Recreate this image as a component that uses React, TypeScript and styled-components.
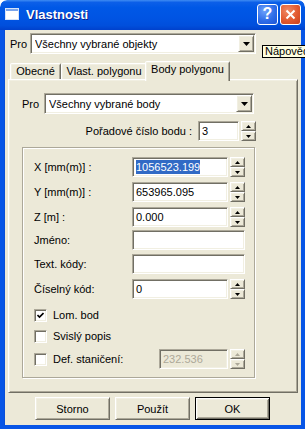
import React from "react";
import styled, { createGlobalStyle, css } from "styled-components";

const GlobalStyle = createGlobalStyle`
  html, body {
    margin: 0;
    padding: 0;
    background: #ffffff;
  }
  body {
    font-family: "Liberation Sans", Arial, sans-serif;
    font-size: 11px;
    color: #000;
  }
`;

const raised = css`
  border: 1px solid;
  border-color: #ffffff #716f64 #716f64 #ffffff;
  box-shadow: inset 1px 1px 0 #f1efe2, inset -1px -1px 0 #aca899;
`;

const sunken = css`
  border: 1px solid;
  border-color: #aca899 #ffffff #ffffff #aca899;
  box-shadow: inset 1px 1px 0 #716f64, inset -1px -1px 0 #f1efe2;
`;

const Window = styled.div`
  position: relative;
  width: 305px;
  height: 429px;
  display: flex;
  flex-direction: column;
  overflow: hidden;
  border-radius: 7px 7px 0 0;
`;

const TitleBar = styled.div`
  flex: none;
  height: 30px;
  box-sizing: border-box;
  display: flex;
  align-items: center;
  padding: 0 4px 2px 5px;
  background: linear-gradient(
    to bottom,
    #3f8cf3 0%,
    #0c5fe8 8%,
    #0058e6 25%,
    #0054e3 60%,
    #004fdc 85%,
    #0041cc 100%
  );
  border-radius: 7px 7px 0 0;
`;

const TitleText = styled.span`
  margin-left: 7px;
  font-size: 13px;
  font-weight: bold;
  color: #ffffff;
  text-shadow: 1px 1px 0 #0a1f8c;
  flex: 1;
`;

const CaptionButton = styled.div<{ $close?: boolean }>`
  width: 21px;
  height: 21px;
  box-sizing: border-box;
  margin-left: 2px;
  border: 1px solid #ffffff;
  border-radius: 3px;
  display: flex;
  align-items: center;
  justify-content: center;
  color: #ffffff;
  font-weight: bold;
  font-size: 16px;
  background: ${(p) =>
    p.$close
      ? "radial-gradient(circle at 35% 30%, #f08a66 0%, #e25a30 55%, #c9401c 100%)"
      : "radial-gradient(circle at 35% 30%, #6ea2fb 0%, #2f6de8 55%, #1c54d6 100%)"};
`;

const Frame = styled.div`
  flex: 1;
  display: flex;
  flex-direction: column;
  background: #ece9d8;
  border: 4px solid #0755e6;
  border-top: 0;
  box-shadow: inset 1px 0 0 #0a4fd8;
`;

const TopRow = styled.div`
  display: flex;
  align-items: center;
  margin: 3px 0 0 6px;
`;

const Label = styled.span<{ $w?: number; $mr?: number }>`
  flex: none;
  width: ${(p) => (p.$w ? `${p.$w}px` : "auto")};
  margin-right: ${(p) => p.$mr ?? 0}px;
  white-space: nowrap;
`;

const Combo = styled.div<{ $w: number }>`
  box-sizing: border-box;
  width: ${(p) => p.$w}px;
  height: 21px;
  ${sunken};
  background: #ffffff;
  display: flex;
  align-items: center;
  padding: 0 1px 0 4px;
`;

const ComboText = styled.span`
  flex: 1;
  white-space: nowrap;
  overflow: hidden;
`;

const DropButton = styled.div`
  box-sizing: border-box;
  width: 16px;
  height: 17px;
  ${raised};
  background: #ece9d8;
  display: flex;
  align-items: center;
  justify-content: center;
`;

const TabStrip = styled.div`
  display: flex;
  align-items: flex-end;
  height: 18px;
  margin: 7px 0 0 4px;
  padding-left: 2px;
`;

const Tab = styled.div<{ $w: number; $active?: boolean }>`
  position: relative;
  box-sizing: border-box;
  width: ${(p) => p.$w}px;
  height: ${(p) => (p.$active ? 20 : 16)}px;
  margin: ${(p) => (p.$active ? "0 -2px -2px -2px" : "0")};
  z-index: ${(p) => (p.$active ? 2 : 1)};
  background: #ece9d8;
  border: 1px solid;
  border-bottom: 0;
  border-color: #ffffff #716f64 transparent #ffffff;
  border-radius: 2px 2px 0 0;
  box-shadow: inset 1px 1px 0 #f1efe2, inset -1px 0 0 #aca899;
  text-align: center;
  line-height: ${(p) => (p.$active ? 15 : 14)}px;
  white-space: nowrap;
`;

const Panel = styled.div`
  position: relative;
  box-sizing: border-box;
  height: 314px;
  margin: 0 3px 0 4px;
  ${raised};
  padding: 13px 41px 0 13px;
  display: flex;
  flex-direction: column;
`;

const PanelRow = styled.div<{ $mt?: number; $end?: boolean }>`
  display: flex;
  align-items: center;
  justify-content: ${(p) => (p.$end ? "flex-end" : "flex-start")};
  margin-top: ${(p) => p.$mt ?? 0}px;
`;

const GroupBox = styled.div`
  box-sizing: border-box;
  width: 233px;
  height: 231px;
  margin-top: 6px;
  border: 1px solid #aca899;
  box-shadow: inset 1px 1px 0 #ffffff, 1px 1px 0 #ffffff;
  padding: 9px 9px 0 11px;
  display: flex;
  flex-direction: column;
`;

const FieldRow = styled.div<{ $mt?: number }>`
  display: grid;
  grid-template-columns: 98px 113px;
  align-items: center;
  height: 20px;
  margin-top: ${(p) => p.$mt ?? 0}px;
`;

const CheckRow = styled.div<{ $mt?: number }>`
  display: flex;
  align-items: center;
  height: 20px;
  margin-top: ${(p) => p.$mt ?? 0}px;
`;

const Field = styled.div<{ $push?: boolean }>`
  display: flex;
  gap: 2px;
  margin-left: ${(p) => (p.$push ? "auto" : "0")};
`;

const Edit = styled.div<{ $w: number; $disabled?: boolean }>`
  box-sizing: border-box;
  width: ${(p) => p.$w}px;
  height: 20px;
  ${sunken};
  background: ${(p) => (p.$disabled ? "#ece9d8" : "#ffffff")};
  color: ${(p) => (p.$disabled ? "#aca899" : "#000")};
  display: flex;
  align-items: center;
  padding-left: 3px;
  white-space: nowrap;
  overflow: hidden;
`;

const Selected = styled.span`
  background: #316ac5;
  color: #ffffff;
  line-height: 14px;
`;

const Spin = styled.div`
  flex: none;
  width: 15px;
  height: 20px;
  display: flex;
  flex-direction: column;
`;

const SpinHalf = styled.div`
  flex: 1;
  box-sizing: border-box;
  ${raised};
  background: #ece9d8;
  display: flex;
  align-items: center;
  justify-content: center;
`;

const CheckBox = styled.div`
  flex: none;
  box-sizing: border-box;
  width: 13px;
  height: 13px;
  ${sunken};
  background: #ffffff;
  display: flex;
  align-items: center;
  justify-content: center;
  margin-right: 6px;
`;

const ButtonRow = styled.div`
  display: flex;
  justify-content: center;
  gap: 5px;
  margin-top: 4px;
`;

const Button = styled.div<{ $default?: boolean }>`
  box-sizing: border-box;
  width: 75px;
  height: 23px;
  display: flex;
  align-items: center;
  justify-content: center;
  background: #ece9d8;
  ${(p) =>
    p.$default
      ? css`
          border: 1px solid #000;
          box-shadow: inset 1px 1px 0 #ffffff, inset -1px -1px 0 #716f64,
            inset 2px 2px 0 #f1efe2, inset -2px -2px 0 #aca899;
        `
      : raised};
`;

const Tooltip = styled.div`
  position: absolute;
  left: 262px;
  top: 45px;
  height: 13px;
  box-sizing: border-box;
  padding: 0 2px;
  background: #ffffe1;
  border: 1px solid #000;
  line-height: 11px;
  white-space: nowrap;
  z-index: 5;
`;

const Arrow = ({ down = true, w = 5, color = "#000" }: { down?: boolean; w?: number; color?: string }) => {
  const h = Math.ceil(w / 2);
  return (
    <svg width={w} height={h} viewBox={`0 0 ${w} ${h}`} style={{ display: "block" }}>
      <polygon points={down ? `0,0 ${w},0 ${w / 2},${h}` : `0,${h} ${w},${h} ${w / 2},0`} fill={color} />
    </svg>
  );
};

const SpinBox = ({ disabled }: { disabled?: boolean }) => {
  const c = disabled ? "#aca899" : "#000";
  return (
    <Spin>
      <SpinHalf>
        <Arrow down={false} w={5} color={c} />
      </SpinHalf>
      <SpinHalf>
        <Arrow w={5} color={c} />
      </SpinHalf>
    </Spin>
  );
};

const Check = () => (
  <svg width="7" height="7" viewBox="0 0 7 7">
    <path d="M0.5 3 L2.5 5 L6.5 1" stroke="#000" strokeWidth="1.6" fill="none" />
  </svg>
);

const WindowIcon = () => (
  <svg width="14" height="12" viewBox="0 0 14 12">
    <rect x="0.5" y="0.5" width="13" height="11" fill="#ffffff" stroke="#d8e4f8" />
    <rect x="1" y="1" width="12" height="2" fill="#7aa4ec" />
  </svg>
);

const CloseGlyph = () => (
  <svg width="11" height="11" viewBox="0 0 11 11">
    <path d="M1.5 1.5 L9.5 9.5 M9.5 1.5 L1.5 9.5" stroke="#fff" strokeWidth="2" />
  </svg>
);

export default function App() {
  return (
    <>
      <GlobalStyle />
      <Window>
        <TitleBar>
          <WindowIcon />
          <TitleText>Vlastnosti</TitleText>
          <CaptionButton>?</CaptionButton>
          <CaptionButton $close>
            <CloseGlyph />
          </CaptionButton>
        </TitleBar>
        <Frame>
          <TopRow>
            <Label $w={20}>Pro</Label>
            <Combo $w={226}>
              <ComboText>Všechny vybrané objekty</ComboText>
              <DropButton>
                <Arrow w={7} />
              </DropButton>
            </Combo>
          </TopRow>

          <TabStrip>
            <Tab $w={51}>Obecné</Tab>
            <Tab $w={86}>Vlast. polygonu</Tab>
            <Tab $w={85} $active>
              Body polygonu
            </Tab>
          </TabStrip>

          <Panel>
            <PanelRow>
              <Label $w={22}>Pro</Label>
              <Combo $w={210}>
                <ComboText>Všechny vybrané body</ComboText>
                <DropButton>
                  <Arrow w={7} />
                </DropButton>
              </Combo>
            </PanelRow>

            <PanelRow $mt={7} $end>
              <Label $mr={6}>Pořadové číslo bodu :</Label>
              <Field>
                <Edit $w={41}>3</Edit>
                <SpinBox />
              </Field>
            </PanelRow>

            <GroupBox>
              <FieldRow>
                <Label>X [mm(m)] :</Label>
                <Field>
                  <Edit $w={96}>
                    <Selected>1056523.199</Selected>
                  </Edit>
                  <SpinBox />
                </Field>
              </FieldRow>
              <FieldRow $mt={5}>
                <Label>Y [mm(m)] :</Label>
                <Field>
                  <Edit $w={96}>653965.095</Edit>
                  <SpinBox />
                </Field>
              </FieldRow>
              <FieldRow $mt={5}>
                <Label>Z [m] :</Label>
                <Field>
                  <Edit $w={96}>0.000</Edit>
                  <SpinBox />
                </Field>
              </FieldRow>
              <FieldRow $mt={3}>
                <Label>Jméno:</Label>
                <Field>
                  <Edit $w={113} />
                </Field>
              </FieldRow>
              <FieldRow $mt={4}>
                <Label>Text. kódy:</Label>
                <Field>
                  <Edit $w={113} />
                </Field>
              </FieldRow>
              <FieldRow $mt={5}>
                <Label>Číselný kód:</Label>
                <Field>
                  <Edit $w={96}>0</Edit>
                  <SpinBox />
                </Field>
              </FieldRow>
              <CheckRow $mt={6}>
                <CheckBox>
                  <Check />
                </CheckBox>
                <Label>Lom. bod</Label>
              </CheckRow>
              <CheckRow $mt={1}>
                <CheckBox />
                <Label>Svislý popis</Label>
              </CheckRow>
              <CheckRow $mt={3}>
                <CheckBox />
                <Label>Def. staničení:</Label>
                <Field $push>
                  <Edit $w={69} $disabled>
                    232.536
                  </Edit>
                  <SpinBox disabled />
                </Field>
              </CheckRow>
            </GroupBox>
          </Panel>

          <ButtonRow>
            <Button>Storno</Button>
            <Button>Použít</Button>
            <Button $default>OK</Button>
          </ButtonRow>
        </Frame>
        <Tooltip>Nápověda</Tooltip>
      </Window>
    </>
  );
}
